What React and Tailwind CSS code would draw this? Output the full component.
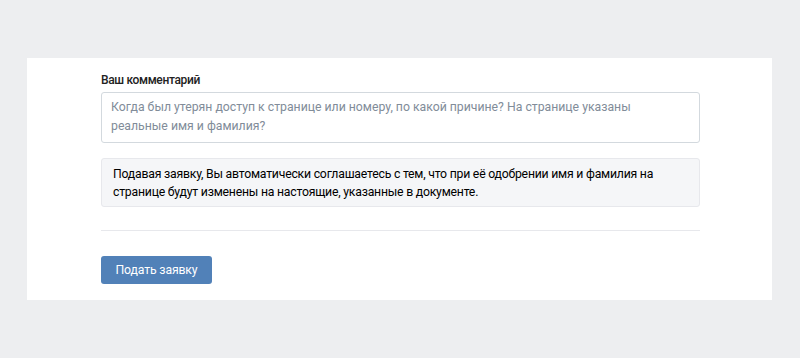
export default function App() {
  return (
    <div className="min-h-[358px] w-[800px] bg-[#edeef0] pt-[58px] pl-[27px]" style={{ fontFamily: 'Roboto, "Liberation Sans", sans-serif' }}>
      <div className="w-[745px] h-[242px] bg-white pl-[74px] pt-[13px]">
        <div className="w-[599px]">
          <div className="text-[12px] leading-[18px] font-medium tracking-[-0.35px] text-[#222]">Ваш комментарий</div>
          <div className="mt-[3px] h-[51px] border border-[#d3d9de] rounded-[3px] px-[9px] pt-[5px] text-[12.25px] leading-[19px] text-[#818c99]">
            Когда был утерян доступ к странице или номеру, по какой причине? На странице указаны реальные имя и фамилия?
          </div>
          <div className="mt-[15px] h-[49px] bg-[#f5f6f8] border border-[#e7e8ec] rounded-[3px] px-[11px] pt-[6px] text-[12.25px] leading-[18px] tracking-[-0.22px] text-black">
            Подавая заявку, Вы автоматически соглашаетесь с тем, что при её одобрении имя и фамилия на странице будут изменены на настоящие, указанные в документе.
          </div>
          <div className="mt-[23px] h-px bg-[#e7e8ec]"></div>
          <button className="mt-[25px] h-[28px] w-[111px] rounded-[3px] bg-[#5181b8] text-white text-[12.25px] leading-[28px] tracking-[-0.15px] text-center">
            Подать заявку
          </button>
        </div>
      </div>
    </div>
  );
}
